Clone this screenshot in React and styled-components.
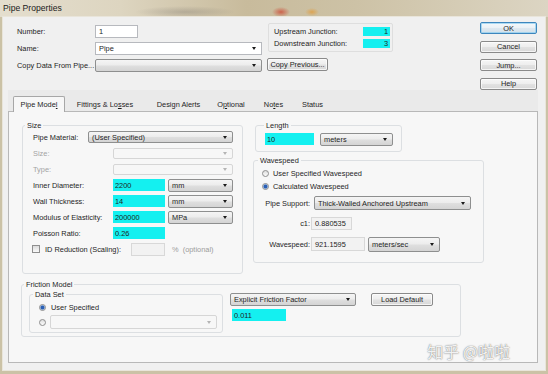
import React from 'react';
import styled, { createGlobalStyle } from 'styled-components';

const GlobalStyle = createGlobalStyle`
  html, body { margin: 0; padding: 0; background: #ffffff; }
  body {
    font-family: "Liberation Sans", Arial, sans-serif;
    font-size: 7.4px;
    color: #1e1e1e;
  }
  * { box-sizing: border-box; }
`;

const panelBg = '#f7f7f7';
const cyan = '#14f0f0';

const Window = styled.div`
  width: 548px;
  height: 374px;
  display: flex;
  flex-direction: column;
  background: #cbc2a6;
  overflow: hidden;
`;

const TitleBar = styled.div`
  height: 17px;
  flex: none;
  display: flex;
  align-items: center;
  padding: 0 0 1px 3px;
  font-size: 8.6px;
  color: #1b1b1b;
  background:
    radial-gradient(ellipse 9px 5px at 281px 12px, rgba(205, 60, 40, 0.7), transparent),
    radial-gradient(ellipse 7px 4px at 312px 12px, rgba(230, 150, 40, 0.65), transparent),
    radial-gradient(ellipse 50px 6px at 185px 12px, rgba(110, 105, 100, 0.3), transparent),
    linear-gradient(90deg, #e4dece 0%, #ddd5c0 22%, #c8bb9c 45%, #cdc2a6 65%, #dcd5c3 100%);
`;

const Client = styled.div`
  flex: none;
  height: 353px;
  margin: 0 3px 4px 3px;
  padding-top: 5px;
  background: #f0f0f0;
  box-shadow: 0 0 0 1px #e9e5da;
`;

const TopRow = styled.div`
  height: 68px;
  display: flex;
  padding-left: 14px;
`;

const LeftFields = styled.div`
  width: 245px;
  margin-top: 3px;
  display: flex;
  flex-direction: column;
  gap: 4px;
`;

const FieldRow = styled.div`
  height: 13px;
  display: flex;
  align-items: center;
`;

const FieldLabel = styled.span`
  width: ${p => p.$w}px;
  flex: none;
  white-space: nowrap;
  padding-left: ${p => p.$pl || 0}px;
  color: ${p => (p.$muted ? '#a3a3a3' : 'inherit')};
  text-align: ${p => (p.$right ? 'right' : 'left')};
`;

const TextBox = styled.div`
  width: ${p => p.$w}px;
  height: ${p => p.$h || 13}px;
  flex: none;
  display: flex;
  align-items: center;
  padding-left: 3px;
  margin-left: ${p => p.$ml || 0}px;
  border: 1px solid ${p => (p.$readonly ? '#d8d8d8' : '#b7b9be')};
  background: ${p => (p.$readonly ? '#f2f2f2' : '#ffffff')};
`;

const Cyan = styled.div`
  width: ${p => p.$w}px;
  height: ${p => p.$h || 12}px;
  flex: none;
  display: flex;
  align-items: center;
  justify-content: ${p => (p.$right ? 'flex-end' : 'flex-start')};
  padding: 0 2px;
  background: ${cyan};
  margin-left: ${p => p.$ml || 0}px;
`;

const Combo = styled.div`
  width: ${p => p.$w}px;
  height: ${p => p.$h || 12}px;
  flex: none;
  display: flex;
  align-items: center;
  margin-left: ${p => p.$ml || 0}px;
  border: 1px solid
    ${p => (p.$variant === 'disabled' ? '#d6d6d6' : p.$variant === 'edit' ? '#b7b9be' : '#8e8f8f')};
  border-radius: ${p => (p.$variant === 'edit' ? 0 : 2)}px;
  background: ${p =>
    p.$variant === 'disabled'
      ? '#f7f7f7'
      : p.$variant === 'edit'
      ? '#ffffff'
      : 'linear-gradient(#f5f5f5, #ececec 48%, #dfdfdf 52%, #d4d4d4)'};
`;

const ComboText = styled.span`
  flex: 1;
  padding-left: 3px;
  white-space: nowrap;
  overflow: hidden;
`;

const Arrow = styled.span`
  width: 0;
  height: 0;
  flex: none;
  margin-right: 5px;
  border-left: 2.5px solid transparent;
  border-right: 2.5px solid transparent;
  border-top: 3px solid ${p => (p.$muted ? '#b4b4b4' : '#1a1a1a')};
`;

const Button = styled.div`
  width: ${p => p.$w}px;
  height: ${p => p.$h || 12}px;
  flex: none;
  display: flex;
  align-items: center;
  justify-content: center;
  align-self: flex-start;
  margin-left: ${p => p.$ml || 0}px;
  margin-top: ${p => p.$mt || 0}px;
  border: 1px solid ${p => (p.$default ? '#3d86bd' : '#8a8a8a')};
  border-radius: 2px;
  background: ${p =>
    p.$default
      ? 'linear-gradient(#f4f8fb, #eaf1f6 48%, #dde8f0 52%, #d3e0ea)'
      : 'linear-gradient(#f6f6f6, #eeeeee 48%, #e2e2e2 52%, #d8d8d8)'};
  box-shadow: inset 0 0 0 1px ${p => (p.$default ? 'rgba(140, 205, 240, 0.7)' : 'rgba(255, 255, 255, 0.7)')};
  white-space: nowrap;
`;

const JunctionCol = styled.div`
  width: 126px;
  margin-left: 5px;
  margin-top: 1px;
  display: flex;
  flex-direction: column;
  gap: 6px;
`;

const JunctionBox = styled.div`
  height: 29px;
  margin-left: 1px;
  padding: 3px 2px 0 5px;
  border: 1px solid #dedede;
  border-radius: 2px;
  display: flex;
  flex-direction: column;
  gap: 3px;
`;

const JunctionRow = styled.div`
  height: 9px;
  display: flex;
  align-items: center;
  justify-content: space-between;
`;

const ButtonCol = styled.div`
  width: 57px;
  margin-left: auto;
  margin-right: 8px;
  display: flex;
  flex-direction: column;
  gap: 6.5px;
`;

const TabControl = styled.div`
  margin: 0 7px 0 5px;
`;

const TabStrip = styled.div`
  height: 21px;
  display: flex;
  align-items: flex-end;
  padding-left: 5px;
  background: #eaeaea;
`;

const Tab = styled.div`
  width: ${p => p.$w}px;
  height: ${p => (p.$active ? 16 : 14)}px;
  flex: none;
  display: flex;
  align-items: center;
  justify-content: center;
  padding-bottom: 1px;
  position: relative;
  z-index: ${p => (p.$active ? 1 : 0)};
  margin-bottom: ${p => (p.$active ? -1 : 0)}px;
  background: ${p => (p.$active ? panelBg : 'transparent')};
  border: 1px solid ${p => (p.$active ? '#a7a7a7' : 'transparent')};
  border-bottom: none;
  border-radius: 2px 2px 0 0;
  white-space: nowrap;
`;

const TabPanel = styled.div`
  height: 252px;
  position: relative;
  border: 1px solid #b8b8b8;
  background: ${panelBg};
  padding: 13px 0 0 13px;
`;

const TopSection = styled.div`
  display: flex;
  gap: 10px;
`;

const Group = styled.div`
  width: ${p => p.$w}px;
  height: ${p => p.$h}px;
  flex: none;
  margin-left: ${p => p.$ml || 0}px;
  margin-top: ${p => p.$mt || 0}px;
  border: 1px solid #dcdfe2;
  border-radius: 3px;
`;

const GroupTitle = styled.div`
  width: fit-content;
  height: 9px;
  line-height: 9px;
  margin: -5px 0 0 ${p => p.$ml || 2}px;
  padding: 0 2px;
  background: ${panelBg};
  white-space: nowrap;
`;

const SizeBody = styled.div`
  margin-top: 1px;
  padding-left: 10px;
  display: flex;
  flex-direction: column;
  gap: 4px;
`;

const SizeRow = styled.div`
  height: 12px;
  display: flex;
  align-items: center;
`;

const CheckBox = styled.span`
  width: 8px;
  height: 8px;
  flex: none;
  margin-left: -1px;
  border: 1px solid #8f8f8f;
  background: linear-gradient(#dcdcdc, #fafafa);
`;

const Hint = styled.span`
  margin-left: 7px;
  color: #9c9c9c;
  white-space: nowrap;
`;

const RightCol = styled.div`
  display: flex;
  flex-direction: column;
`;

const LengthBody = styled.div`
  margin-top: 3px;
  padding-left: 9px;
  display: flex;
  gap: 6px;
`;

const WaveBody = styled.div`
  padding-left: 8px;
  display: flex;
  flex-direction: column;
`;

const RadioRow = styled.div`
  height: ${p => p.$h || 9}px;
  margin-top: ${p => p.$mt || 0}px;
  display: flex;
  align-items: center;
  gap: ${p => p.$gap || 4}px;
  white-space: nowrap;
`;

const Radio = styled.span`
  width: 7px;
  height: 7px;
  flex: none;
  border-radius: 50%;
  border: 1px solid #8d8d8d;
  background: ${p =>
    p.$checked
      ? 'radial-gradient(circle, #2b5fb4 0 1.5px, #86ace0 2.1px, #f3f3f3 2.7px)'
      : 'linear-gradient(#dedede, #fbfbfb)'};
`;

const WaveRow = styled.div`
  height: ${p => p.$h || 13}px;
  margin-top: ${p => p.$mt || 0}px;
  display: flex;
  align-items: center;
`;

const FrictionBody = styled.div`
  padding-left: 7px;
  display: flex;
`;

const DataSetBody = styled.div`
  padding-left: 9px;
  display: flex;
  flex-direction: column;
`;

const FactorCol = styled.div`
  margin-left: 7px;
  margin-top: 4px;
  display: flex;
  flex-direction: column;
  gap: 3px;
`;

const Watermark = styled.div`
  position: absolute;
  right: 27px;
  bottom: 2px;
  font-family: "Noto Sans CJK SC", "Liberation Sans", sans-serif;
  font-size: 16px;
  line-height: 18px;
  color: rgba(255, 255, 255, 0.92);
  text-shadow: 0 0 1px rgba(0, 0, 0, 0.5), 0 0 2px rgba(0, 0, 0, 0.25);
  white-space: nowrap;
`;

const tabs = [
  { w: 52, label: <>Pipe Mode<u>l</u></>, active: true },
  { w: 80, label: <>Fittings &amp; Lo<u>s</u>ses</> },
  { w: 67, label: <>Desi<u>g</u>n Alerts</> },
  { w: 38, label: <>O<u>p</u>tional</> },
  { w: 47, label: <>No<u>t</u>es</> },
  { w: 31, label: <>Status</> },
];

export default function App() {
  return (
    <>
      <GlobalStyle />
      <Window>
        <TitleBar>Pipe Properties</TitleBar>
        <Client>
          <TopRow>
            <LeftFields>
              <FieldRow>
                <FieldLabel $w={78}>Number:</FieldLabel>
                <TextBox $w={43}>1</TextBox>
              </FieldRow>
              <FieldRow>
                <FieldLabel $w={78}>Name:</FieldLabel>
                <Combo $w={167} $h={13} $variant="edit">
                  <ComboText>Pipe</ComboText>
                  <Arrow />
                </Combo>
              </FieldRow>
              <FieldRow>
                <FieldLabel $w={78}>Copy Data From Pipe...</FieldLabel>
                <Combo $w={167} $h={13}>
                  <ComboText />
                  <Arrow />
                </Combo>
              </FieldRow>
            </LeftFields>

            <JunctionCol>
              <JunctionBox>
                <JunctionRow>
                  <span>Upstream Junction:</span>
                  <Cyan $w={27} $h={9} $right>1</Cyan>
                </JunctionRow>
                <JunctionRow>
                  <span>Downstream Junction:</span>
                  <Cyan $w={27} $h={9} $right>3</Cyan>
                </JunctionRow>
              </JunctionBox>
              <Button $w={61} $h={13}>Copy Previous...</Button>
            </JunctionCol>

            <ButtonCol>
              <Button $w={57} $default>OK</Button>
              <Button $w={57}>Cancel</Button>
              <Button $w={57}>Jump...</Button>
              <Button $w={57}>Help</Button>
            </ButtonCol>
          </TopRow>

          <TabControl>
            <TabStrip>
              {tabs.map((t, i) => (
                <Tab key={i} $w={t.w} $active={t.active}>{t.label}</Tab>
              ))}
            </TabStrip>
            <TabPanel>
              <TopSection>
                <Group $w={221} $h={149}>
                  <GroupTitle>Size</GroupTitle>
                  <SizeBody>
                    <SizeRow>
                      <FieldLabel $w={55}>Pipe Material:</FieldLabel>
                      <Combo $w={145}>
                        <ComboText>(User Specified)</ComboText>
                        <Arrow />
                      </Combo>
                    </SizeRow>
                    <SizeRow>
                      <FieldLabel $w={80} $muted>Size:</FieldLabel>
                      <Combo $w={120} $h={11} $variant="disabled">
                        <ComboText />
                        <Arrow $muted />
                      </Combo>
                    </SizeRow>
                    <SizeRow>
                      <FieldLabel $w={80} $muted>Type:</FieldLabel>
                      <Combo $w={120} $h={11} $variant="disabled">
                        <ComboText />
                        <Arrow $muted />
                      </Combo>
                    </SizeRow>
                    <SizeRow>
                      <FieldLabel $w={80}>Inner Diameter:</FieldLabel>
                      <Cyan $w={52}>2200</Cyan>
                      <Combo $w={65} $h={13} $ml={3}>
                        <ComboText>mm</ComboText>
                        <Arrow />
                      </Combo>
                    </SizeRow>
                    <SizeRow>
                      <FieldLabel $w={80}>Wall Thickness:</FieldLabel>
                      <Cyan $w={52}>14</Cyan>
                      <Combo $w={65} $h={13} $ml={3}>
                        <ComboText>mm</ComboText>
                        <Arrow />
                      </Combo>
                    </SizeRow>
                    <SizeRow>
                      <FieldLabel $w={80}>Modulus of Elasticity:</FieldLabel>
                      <Cyan $w={52}>200000</Cyan>
                      <Combo $w={65} $h={13} $ml={3}>
                        <ComboText>MPa</ComboText>
                        <Arrow />
                      </Combo>
                    </SizeRow>
                    <SizeRow>
                      <FieldLabel $w={80}>Poisson Ratio:</FieldLabel>
                      <Cyan $w={52}>0.26</Cyan>
                    </SizeRow>
                    <SizeRow>
                      <CheckBox />
                      <FieldLabel $w={91} $pl={5}>ID Reduction (Scaling):</FieldLabel>
                      <TextBox $w={34} $h={13} $readonly />
                      <Hint>%&nbsp; (optional)</Hint>
                    </SizeRow>
                  </SizeBody>
                </Group>

                <RightCol>
                  <Group $w={147} $h={27} $ml={2}>
                    <GroupTitle $ml={8}>Length</GroupTitle>
                    <LengthBody>
                      <Cyan $w={49}>10</Cyan>
                      <Combo $w={73} $h={13}>
                        <ComboText>meters</ComboText>
                        <Arrow />
                      </Combo>
                    </LengthBody>
                  </Group>
                  <Group $w={231} $h={103} $mt={8}>
                    <GroupTitle $ml={4}>Wavespeed</GroupTitle>
                    <WaveBody>
                      <RadioRow $mt={3.5}>
                        <Radio />
                        <span>User Specified Wavespeed</span>
                      </RadioRow>
                      <RadioRow $mt={4}>
                        <Radio $checked />
                        <span>Calculated Wavespeed</span>
                      </RadioRow>
                      <WaveRow $mt={5.5} $h={14}>
                        <FieldLabel $w={48} $right>Pipe Support:</FieldLabel>
                        <Combo $w={157} $h={14} $ml={4}>
                          <ComboText>Thick-Walled Anchored Upstream</ComboText>
                          <Arrow />
                        </Combo>
                      </WaveRow>
                      <WaveRow $mt={7}>
                        <FieldLabel $w={48} $right>c1:</FieldLabel>
                        <TextBox $w={41} $readonly $ml={1}>0.880535</TextBox>
                      </WaveRow>
                      <WaveRow $mt={7} $h={14}>
                        <FieldLabel $w={48} $right>Wavespeed:</FieldLabel>
                        <TextBox $w={54} $h={14} $readonly $ml={1}>921.1595</TextBox>
                        <Combo $w={72} $h={15} $ml={3}>
                          <ComboText>meters/sec</ComboText>
                          <Arrow />
                        </Combo>
                      </WaveRow>
                    </WaveBody>
                  </Group>
                </RightCol>
              </TopSection>

              <Group $w={440} $h={53} $mt={10} $ml={-1}>
                <GroupTitle>Friction Model</GroupTitle>
                <FrictionBody>
                  <Group $w={194} $h={39} $mt={5}>
                    <GroupTitle $ml={3}>Data Set</GroupTitle>
                    <DataSetBody>
                      <RadioRow $mt={3.5} $gap={5}>
                        <Radio $checked />
                        <span>User Specified</span>
                      </RadioRow>
                      <RadioRow $mt={3.5} $h={14} $gap={4}>
                        <Radio />
                        <Combo $w={167} $h={14} $variant="disabled">
                          <ComboText />
                          <Arrow $muted />
                        </Combo>
                      </RadioRow>
                    </DataSetBody>
                  </Group>
                  <FactorCol>
                    <Combo $w={126} $h={13}>
                      <ComboText>Explicit Friction Factor</ComboText>
                      <Arrow />
                    </Combo>
                    <Cyan $w={54} $ml={2}>0.011</Cyan>
                  </FactorCol>
                  <Button $w={62} $h={13} $ml={15} $mt={4}>Load Default</Button>
                </FrictionBody>
              </Group>

              <Watermark>知乎 @啦啦</Watermark>
            </TabPanel>
          </TabControl>
        </Client>
      </Window>
    </>
  );
}
